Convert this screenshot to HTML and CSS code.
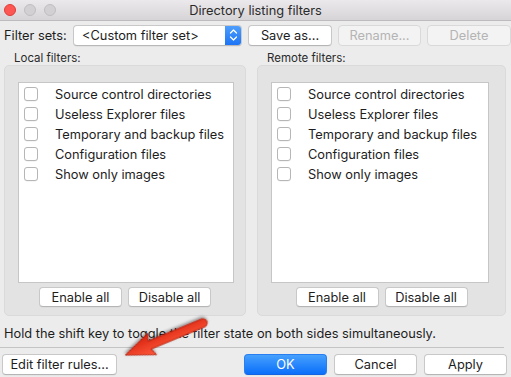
FILE: index.html
```html
<!DOCTYPE html>
<html>
<head>
<meta charset="utf-8">
<link rel="stylesheet" href="styles.css">
</head>
<body>
<div class="window">
  <div class="titlebar">
    <div class="lights">
      <span class="light red"></span>
      <span class="light"></span>
      <span class="light"></span>
    </div>
    <div class="title">Directory listing filters</div>
  </div>

  <div class="toolbar">
    <span class="tb-label">Filter sets:</span>
    <div class="select">
      <span class="select-text">&lt;Custom filter set&gt;</span>
      <span class="stepper">
        <svg width="17" height="20" viewBox="0 0 17 20">
          <path d="M5.5 8 L8.5 5 L11.5 8" fill="none" stroke="#fff" stroke-width="1.3" stroke-linecap="round" stroke-linejoin="round"/>
          <path d="M5.5 12 L8.5 15 L11.5 12" fill="none" stroke="#fff" stroke-width="1.3" stroke-linecap="round" stroke-linejoin="round"/>
        </svg>
      </span>
    </div>
    <button class="btn btn-save">Save as...</button>
    <button class="btn btn-disabled btn-rename">Rename...</button>
    <button class="btn btn-disabled btn-delete">Delete</button>
  </div>

  <div class="panels">
    <div class="panel panel-local">
      <div class="panel-title">Local filters:</div>
      <div class="group">
        <div class="list">
          <div class="row"><span class="cb"></span><span class="lbl">Source control directories</span></div>
          <div class="row"><span class="cb"></span><span class="lbl">Useless Explorer files</span></div>
          <div class="row"><span class="cb"></span><span class="lbl">Temporary and backup files</span></div>
          <div class="row"><span class="cb"></span><span class="lbl">Configuration files</span></div>
          <div class="row"><span class="cb"></span><span class="lbl">Show only images</span></div>
        </div>
        <div class="group-buttons">
          <button class="btn btn-small">Enable all</button>
          <button class="btn btn-small">Disable all</button>
        </div>
      </div>
    </div>
    <div class="panel panel-remote">
      <div class="panel-title">Remote filters:</div>
      <div class="group">
        <div class="list">
          <div class="row"><span class="cb"></span><span class="lbl">Source control directories</span></div>
          <div class="row"><span class="cb"></span><span class="lbl">Useless Explorer files</span></div>
          <div class="row"><span class="cb"></span><span class="lbl">Temporary and backup files</span></div>
          <div class="row"><span class="cb"></span><span class="lbl">Configuration files</span></div>
          <div class="row"><span class="cb"></span><span class="lbl">Show only images</span></div>
        </div>
        <div class="group-buttons">
          <button class="btn btn-small">Enable all</button>
          <button class="btn btn-small">Disable all</button>
        </div>
      </div>
    </div>
  </div>

  <div class="hint">Hold the shift key to toggle the filter state on both sides simultaneously.</div>
  <div class="separator"></div>

  <div class="footer">
    <button class="btn btn-edit">Edit filter rules...</button>
    <div class="footer-right">
      <button class="btn btn-primary">OK</button>
      <button class="btn btn-foot">Cancel</button>
      <button class="btn btn-foot">Apply</button>
    </div>
  </div>

  <svg class="arrow" width="511" height="377" viewBox="0 0 511 377">
    <defs>
      <linearGradient id="ag" x1="0" y1="0" x2="0" y2="1">
        <stop offset="0" stop-color="#ff5a3c"/>
        <stop offset="1" stop-color="#d8230f"/>
      </linearGradient>
      <filter id="sh" x="-20%" y="-50%" width="140%" height="200%">
        <feDropShadow dx="0" dy="1.5" stdDeviation="1.5" flood-color="#000" flood-opacity="0.45"/>
      </filter>
    </defs>
    <g transform="translate(203 323) rotate(157.5)" filter="url(#sh)">
      <path d="M0 -4.2 L58 -4.2 L55 -11.5 L84 0 L55 11.5 L58 4.2 L0 4.2 A4.2 4.2 0 0 1 0 -4.2 Z" fill="url(#ag)" stroke="#b01a08" stroke-width="0.8" stroke-linejoin="round"/>
    </g>
  </svg>
</div>
</body>
</html>
```

FILE: styles.css
```css
* { box-sizing: border-box; }
html, body { margin: 0; padding: 0; }
body {
  font-family: "Inter", "Liberation Sans", sans-serif;
  font-size: 12.8px;
  color: #1d1d1d;
}
.window {
  position: relative;
  width: 511px;
  height: 377px;
  background: #ececec;
  overflow: hidden;
}
.titlebar {
  position: relative;
  height: 21px;
  background: linear-gradient(#ebe9eb, #d6d4d6);
  border-bottom: 1px solid #bdbbbd;
  display: flex;
  align-items: center;
  justify-content: center;
}
.lights {
  position: absolute;
  left: 4px;
  top: 4px;
  display: flex;
  gap: 8px;
}
.light {
  width: 12px;
  height: 12px;
  border-radius: 50%;
  background: #d2d0d2;
  border: 1px solid #c0bec0;
}
.light.red {
  background: #fc5753;
  border-color: #df3d39;
}
.title {
  font-size: 12.8px;
  color: #2a2a2a;
  margin-top: 1px;
}
.toolbar {
  display: flex;
  align-items: center;
  height: 21px;
  margin-top: 4px;
  padding-left: 4px;
}
.tb-label { width: 69px; }
.select {
  width: 169px;
  height: 21px;
  background: #fff;
  border: 1px solid #c8c8c8;
  border-bottom-color: #b8b8b8;
  border-radius: 4px;
  display: flex;
  align-items: center;
  overflow: hidden;
  box-shadow: 0 0.5px 0.5px rgba(0,0,0,0.08);
}
.select-text {
  flex: 1;
  padding-left: 8px;
  white-space: nowrap;
}
.stepper {
  width: 17px;
  height: 21px;
  margin-top: -1px;
  margin-right: -1px;
  background: linear-gradient(#4fa0fd, #1a72f5);
  border-radius: 0 4px 4px 0;
  display: flex;
}
.btn {
  font-family: inherit;
  font-size: 12.8px;
  color: #1d1d1d;
  background: #fff;
  border: 1px solid #c8c8c8;
  border-bottom-color: #b5b5b5;
  border-radius: 4px;
  height: 21px;
  padding: 0;
  box-shadow: 0 0.5px 0.5px rgba(0,0,0,0.06);
}
.btn-save { width: 84px; margin-left: 6px; }
.btn-rename { width: 83px; margin-left: 6px; }
.btn-delete { width: 84px; margin-left: 6px; }
.btn-disabled {
  background: #f3f3f3;
  color: #b4b4b4;
  border-color: #d9d9d9;
  box-shadow: none;
}
.panels {
  display: flex;
  padding-left: 4px;
  margin-top: 4px;
  gap: 11px;
}
.panel-title {
  padding-left: 10px;
  height: 14px;
  line-height: 17px;
  font-size: 11.5px;
  color: #2a2a2a;
}
.panel-local .group { width: 242px; }
.panel-remote .group { width: 249px; }
.group {
  margin-top: 1px;
  height: 251px;
  background: #e3e3e3;
  border: 1px solid #dadada;
  border-radius: 5px;
  padding: 16px 0 0 13px;
}
.list {
  height: 201px;
  background: #fff;
  border: 1px solid #c6c6c6;
  padding-top: 1px;
}
.panel-local .list { width: 216px; }
.panel-remote .list { width: 218px; }
.row {
  display: flex;
  align-items: center;
  height: 20px;
}
.cb {
  width: 14px;
  height: 14px;
  margin-left: 5px;
  border: 1px solid #b6b6b6;
  border-radius: 3px;
  background: #fff;
  box-shadow: 0 0.5px 0.5px rgba(0,0,0,0.08);
}
.lbl {
  margin-left: 17px;
  white-space: nowrap;
}
.group-buttons {
  display: flex;
  justify-content: center;
  gap: 6px;
  margin-top: 4px;
  margin-left: -13px;
}
.btn-small { width: 83px; height: 20px; }
.hint {
  margin-top: 9px;
  padding-left: 4px;
  height: 18px;
  line-height: 18px;
  white-space: nowrap;
}
.separator {
  margin-top: 4px;
  width: 504px;
  height: 1px;
  background: #c4c4c4;
}
.footer {
  display: flex;
  align-items: center;
  justify-content: space-between;
  padding: 0 4px 0 2px;
  margin-top: 6px;
}
.btn-edit { width: 115px; }
.footer-right { display: flex; gap: 7px; }
.btn-foot { width: 83px; }
.btn-primary {
  width: 83px;
  color: #fff;
  background: linear-gradient(#46a0fd, #0b6ffa);
  border-color: #2a7ff0;
  border-bottom-color: #1663df;
}
.arrow {
  position: absolute;
  left: 0;
  top: 0;
  pointer-events: none;
}
```
